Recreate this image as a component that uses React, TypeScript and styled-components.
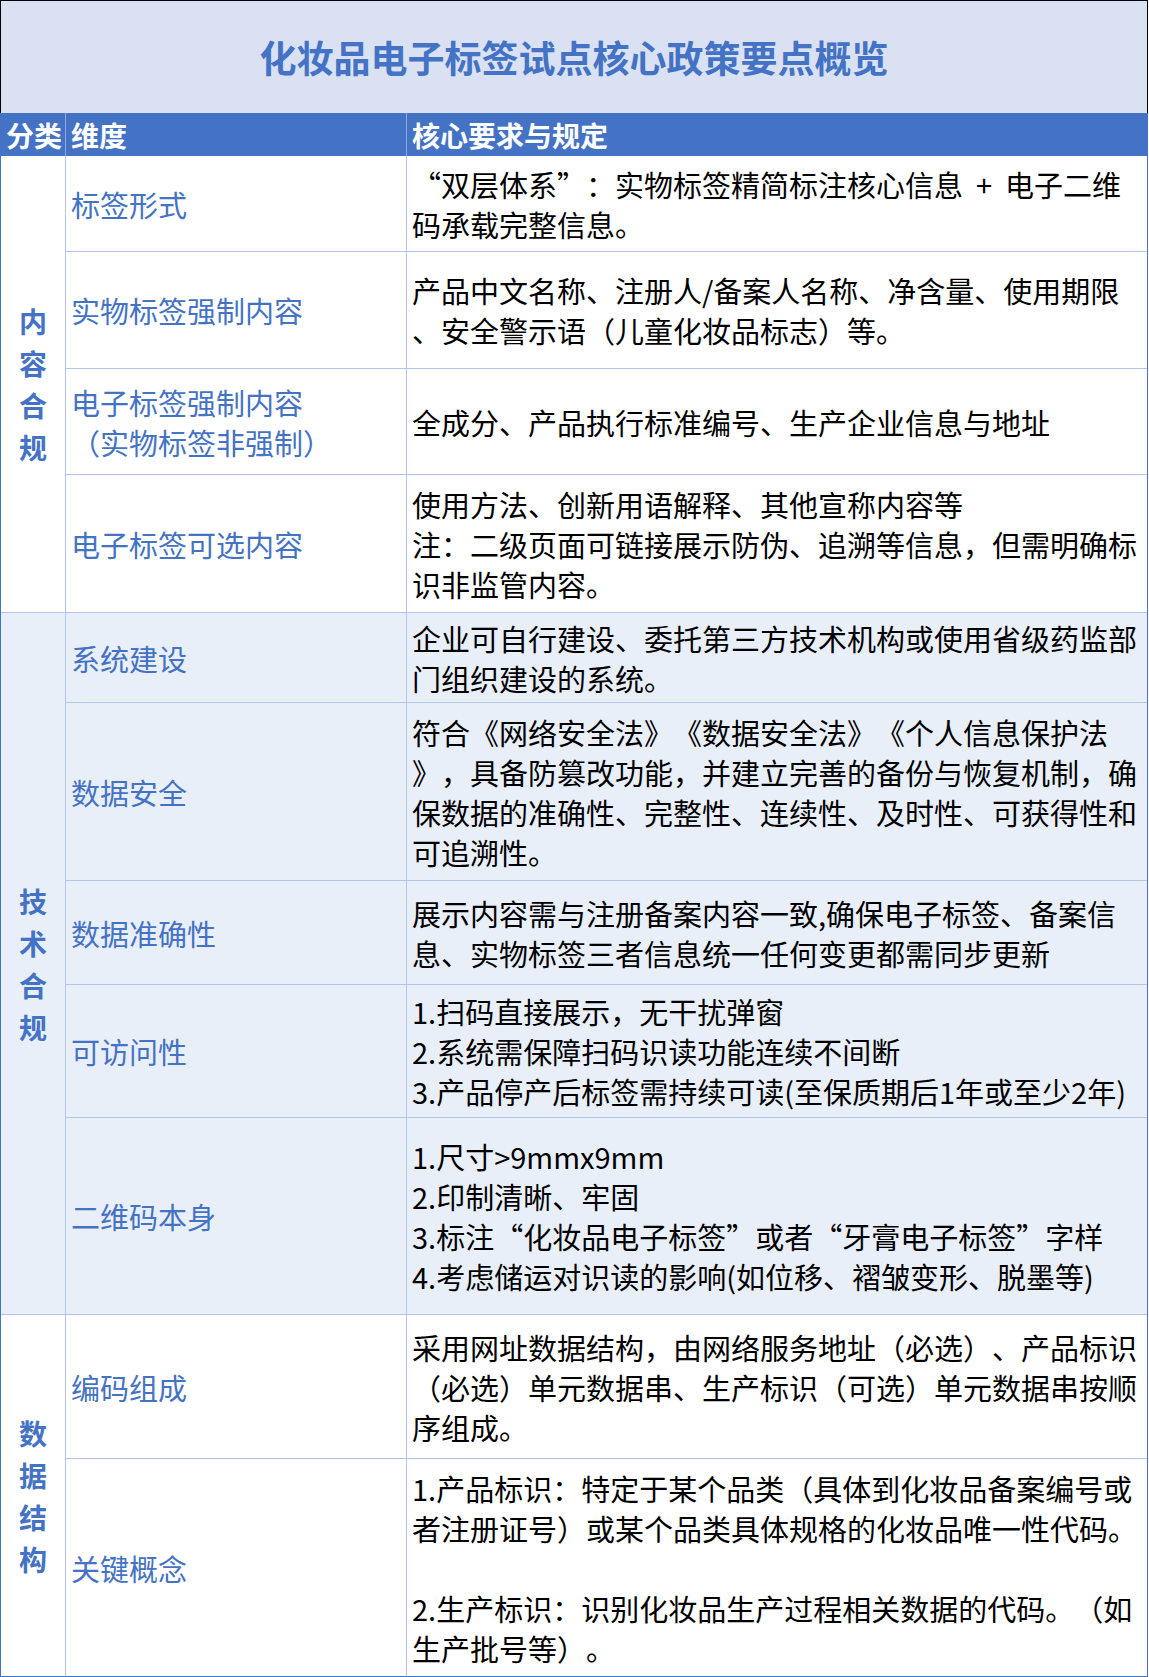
import React from "react";
import styled, { createGlobalStyle } from "styled-components";

const GlobalStyle = createGlobalStyle`
  html, body {
    margin: 0;
    padding: 0;
    background: #ffffff;
  }
  body {
    font-family: "Noto Sans CJK SC", "Microsoft YaHei", "Noto Sans", sans-serif;
    color: #000000;
    text-spacing-trim: space-all;
  }
`;

const BLUE = "#4472C4";
const LINE = "#B4C6E7";
const BAND = "#E9EFF9";

const Page = styled.div`
  width: 1148px;
  box-sizing: border-box;
  text-spacing-trim: space-all;
`;

const TitleBar = styled.div`
  height: 113px;
  box-sizing: border-box;
  border: 1px solid #000000;
  border-bottom: none;
  background: #d9e1f2;
  display: flex;
  align-items: center;
  justify-content: center;
`;

const TitleText = styled.h1`
  margin: 0;
  font-size: 37px;
  font-weight: 700;
  color: ${BLUE};
  line-height: 1;
  letter-spacing: 0;
`;

const Table = styled.div`
  display: grid;
  grid-template-columns: 65px 341px 1fr;
  border-left: 1px solid ${BLUE};
  border-right: 1px solid ${BLUE};
  box-sizing: border-box;
`;

const HeaderCell = styled.div<{ $end?: boolean }>`
  height: 43px;
  box-sizing: border-box;
  background: ${BLUE};
  color: #ffffff;
  font-size: 28px;
  font-weight: 700;
  display: flex;
  align-items: center;
  padding-left: 5px;
  white-space: nowrap;
  border-right: ${(p) => (p.$end ? "none" : "1px solid #8ea9db")};
`;

const CategoryCell = styled.div<{ $rows: number; $alt?: boolean; $last?: boolean }>`
  grid-column: 1;
  grid-row: span ${(p) => p.$rows};
  background: ${(p) => (p.$alt ? BAND : "#ffffff")};
  border-right: 1px solid ${LINE};
  border-bottom: 1px solid ${(p) => (p.$last ? BLUE : LINE)};
  box-sizing: border-box;
  display: flex;
  align-items: center;
  justify-content: center;
`;

const CategoryText = styled.div`
  width: 1em;
  font-size: 28px;
  line-height: 42px;
  font-weight: 700;
  color: ${BLUE};
  text-align: center;
`;

const LabelCell = styled.div<{ $h: number; $alt?: boolean; $last?: boolean }>`
  grid-column: 2;
  min-height: ${(p) => p.$h}px;
  background: ${(p) => (p.$alt ? BAND : "#ffffff")};
  border-right: 1px solid ${LINE};
  border-bottom: 1px solid ${(p) => (p.$last ? BLUE : LINE)};
  box-sizing: border-box;
  display: flex;
  align-items: center;
  padding-left: 5px;
  font-size: 29px;
  line-height: 40px;
  color: ${BLUE};
`;

const ContentCell = styled.div<{ $alt?: boolean; $last?: boolean }>`
  grid-column: 3;
  background: ${(p) => (p.$alt ? BAND : "#ffffff")};
  border-bottom: 1px solid ${(p) => (p.$last ? BLUE : LINE)};
  box-sizing: border-box;
  display: flex;
  align-items: center;
  padding-left: 5px;
  font-size: 29px;
  line-height: 40px;
  color: #000000;
  overflow: hidden;
`;

const Lines = styled.div`
  display: flex;
  flex-direction: column;
`;

const Line = styled.span`
  display: block;
  white-space: pre;
  min-height: 40px;
  text-spacing-trim: space-all;
`;

type Row = { label: string[]; h: number; lines: string[] };
type Group = { name: string; alt?: boolean; last?: boolean; rows: Row[] };

const groups: Group[] = [
  {
    name: "内容合规",
    rows: [
      {
        label: ["标签形式"],
        h: 96,
        lines: ["“双层体系”：实物标签精简标注核心信息  +  电子二维", "码承载完整信息。"],
      },
      {
        label: ["实物标签强制内容"],
        h: 117,
        lines: ["产品中文名称、注册人/备案人名称、净含量、使用期限", "、安全警示语（儿童化妆品标志）等。"],
      },
      {
        label: ["电子标签强制内容", "（实物标签非强制）"],
        h: 106,
        lines: ["全成分、产品执行标准编号、生产企业信息与地址"],
      },
      {
        label: ["电子标签可选内容"],
        h: 138,
        lines: [
          "使用方法、创新用语解释、其他宣称内容等",
          "注：二级页面可链接展示防伪、追溯等信息，但需明确标",
          "识非监管内容。",
        ],
      },
    ],
  },
  {
    name: "技术合规",
    alt: true,
    rows: [
      {
        label: ["系统建设"],
        h: 90,
        lines: ["企业可自行建设、委托第三方技术机构或使用省级药监部", "门组织建设的系统。"],
      },
      {
        label: ["数据安全"],
        h: 178,
        lines: [
          "符合《网络安全法》《数据安全法》《个人信息保护法",
          "》，具备防篡改功能，并建立完善的备份与恢复机制，确",
          "保数据的准确性、完整性、连续性、及时性、可获得性和",
          "可追溯性。",
        ],
      },
      {
        label: ["数据准确性"],
        h: 104,
        lines: ["展示内容需与注册备案内容一致,确保电子标签、备案信", "息、实物标签三者信息统一任何变更都需同步更新"],
      },
      {
        label: ["可访问性"],
        h: 133,
        lines: [
          "1.扫码直接展示，无干扰弹窗",
          "2.系统需保障扫码识读功能连续不间断",
          "3.产品停产后标签需持续可读(至保质期后1年或至少2年)",
        ],
      },
      {
        label: ["二维码本身"],
        h: 197,
        lines: [
          "1.尺寸>9mmx9mm",
          "2.印制清晰、牢固",
          "3.标注“化妆品电子标签”或者“牙膏电子标签”字样",
          "4.考虑储运对识读的影响(如位移、褶皱变形、脱墨等)",
        ],
      },
    ],
  },
  {
    name: "数据结构",
    last: true,
    rows: [
      {
        label: ["编码组成"],
        h: 144,
        lines: [
          "采用网址数据结构，由网络服务地址（必选）、产品标识",
          "（必选）单元数据串、生产标识（可选）单元数据串按顺",
          "序组成。",
        ],
      },
      {
        label: ["关键概念"],
        h: 218,
        lines: [
          "1.产品标识：特定于某个品类（具体到化妆品备案编号或",
          "者注册证号）或某个品类具体规格的化妆品唯一性代码。",
          "",
          "2.生产标识：识别化妆品生产过程相关数据的代码。（如",
          "生产批号等）。",
        ],
      },
    ],
  },
];

export default function App() {
  return (
    <Page lang="zh-CN">
      <GlobalStyle />
      <TitleBar>
        <TitleText>化妆品电子标签试点核心政策要点概览</TitleText>
      </TitleBar>
      <Table>
        <HeaderCell>分类</HeaderCell>
        <HeaderCell>维度</HeaderCell>
        <HeaderCell $end>核心要求与规定</HeaderCell>
        {groups.map((g) => (
          <React.Fragment key={g.name}>
            <CategoryCell $rows={g.rows.length} $alt={g.alt} $last={g.last}>
              <CategoryText>{g.name}</CategoryText>
            </CategoryCell>
            {g.rows.map((r, i) => {
              const isLast = !!g.last && i === g.rows.length - 1;
              return (
                <React.Fragment key={r.label.join("")}>
                  <LabelCell $h={r.h} $alt={g.alt} $last={isLast}>
                    <Lines>
                      {r.label.map((l) => (
                        <Line key={l}>{l}</Line>
                      ))}
                    </Lines>
                  </LabelCell>
                  <ContentCell $alt={g.alt} $last={isLast}>
                    <Lines>
                      {r.lines.map((l, j) => (
                        <Line key={j}>{l}</Line>
                      ))}
                    </Lines>
                  </ContentCell>
                </React.Fragment>
              );
            })}
          </React.Fragment>
        ))}
      </Table>
    </Page>
  );
}
